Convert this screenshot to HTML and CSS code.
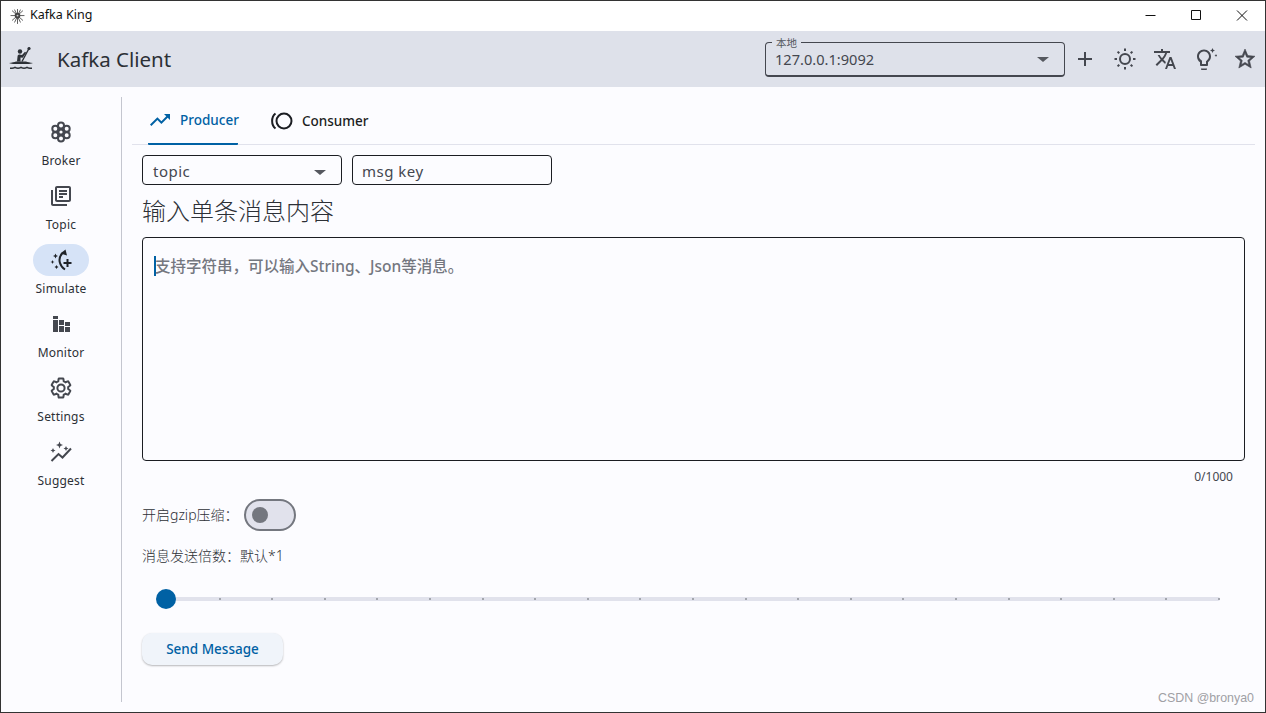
FILE: index.html
```html
<!DOCTYPE html>
<html lang="zh">
<head>
<meta charset="utf-8">
<title>Kafka King</title>
<link rel="stylesheet" href="styles.css">
</head>
<body>
<div class="window">
  <header class="titlebar">
    <svg class="app-logo" viewBox="0 0 16 16"><g stroke="#555" stroke-width="1" stroke-linecap="round"><path d="M8 0.500v15M1 7h14M2.500 2l11 10M13.500 2l-11 10M5 1l6 13M11 1l-6 13"/></g><circle cx="8" cy="7" r="3" fill="#444"/><circle cx="8" cy="7" r="1" fill="#ccc"/></svg>
    <span class="title-text">Kafka King</span>
    <div class="win-controls">
      <svg class="win-btn" viewBox="0 0 46 30"><path d="M18.500 14.500h10" stroke="#111" fill="none"/></svg>
      <svg class="win-btn" viewBox="0 0 46 30"><path d="M18.500 9.500h9v9h-9z" stroke="#111" fill="none"/></svg>
      <svg class="win-btn" viewBox="0 0 46 30"><path d="M18 9.500l10 10M28 9.500l-10 10" stroke="#111" fill="none"/></svg>
    </div>
  </header>

  <div class="appbar">
    <svg class="kayak" viewBox="0 0 24 24"><circle cx="11" cy="5.500" r="2.200"/><path d="M8 15.500l.6-5.500c.2-1 1-1.500 2-1.500l2.400.5 3-3.200 1.200.9-3.500 5-2.200-.2v4z"/><path d="M20.500 1.500l-7.500 14" stroke="#2c3036" stroke-width="1.400" fill="none"/><circle cx="20" cy="2.500" r="1.600"/><path d="M0 17c3-.4 5.500-1 7-1.500h10c1.500.5 4 1.100 7 1.500-2 .8-4 1-5 1H5c-1 0-3-.2-5-1z"/><path d="M21 23c-1.030 0-2.060-.25-3-.75-1.890 1-4.110 1-6 0-1.890 1-4.110 1-6 0-.95.5-1.970.75-3 .75H1v-1.500h2c1.040 0 2.080-.35 3-1 1.830 1.300 4.170 1.300 6 0 1.830 1.300 4.170 1.300 6 0 .91.65 1.960 1 3 1h2V23z"/></svg>
    <h1 class="brand">Kafka Client</h1>
    <div class="host-select">
      <span class="host-legend">本地</span>
      <span class="host-value">127.0.0.1:9092</span>
      <span class="caret-down"></span>
    </div>
    <div class="actions">
      <svg class="ic" viewBox="0 0 24 24"><path d="M19 13h-6v6h-2v-6H5v-2h6V5h2v6h6z"/></svg>
      <svg class="ic" viewBox="0 0 24 24"><circle cx="12" cy="12" r="5" fill="none" stroke="#44474f" stroke-width="2"/><path d="M12 1.500v2.500M12 20v2.500M1.500 12H4M20 12h2.500M4.600 4.600l1.700 1.700M17.700 17.700l1.700 1.700M4.600 19.400l1.700-1.700M17.700 6.300l1.700-1.700" stroke="#44474f" stroke-width="2" fill="none"/></svg>
      <svg class="ic" viewBox="0 0 24 24"><path d="M12.870 15.070l-2.540-2.510.03-.03c1.740-1.940 2.980-4.170 3.710-6.530H17V4h-7V2H8v2H1v1.990h11.170C11.500 7.920 10.440 9.750 9 11.350 8.070 10.320 7.300 9.190 6.690 8h-2c.73 1.630 1.730 3.170 2.980 4.560l-5.090 5.020L4 19l5-5 3.110 3.110.76-2.040zM18.500 10h-2L12 22h2l1.120-3h4.750L21 22h2l-4.500-12zm-2.620 7l1.620-4.330L19.120 17h-3.240z"/></svg>
      <svg class="ic" viewBox="0 0 24 24"><path d="M8 22c0 .5.400 1 1 1h4c.600 0 1-.5 1-1v-.500H8zm3-19.500c-3.900 0-7 3.100-7 7 0 2.400 1.200 4.500 3 5.700V18c0 .5.400 1 1 1h6c.600 0 1-.5 1-1v-2.800c1.800-1.300 3-3.400 3-5.700 0-3.900-3.100-7-7-7zm2.800 11.100l-.8.600V17H9v-3.300l-.8-.6C6.800 12.200 6 10.600 6 9.500c0-2.800 2.200-5 5-5s5 2.200 5 5c0 1.100-.8 2.700-2.200 4.100z"/><path d="M19.500 1l.8 1.700 1.700.8-1.700.8-.8 1.700-.8-1.700-1.700-.8 1.700-.8zM23 7l.5 1 1 .5-1 .5-.5 1-.5-1-1-.5 1-.5z"/></svg>
      <svg class="ic" viewBox="0 0 24 24"><path d="M22 9.240l-7.190-.62L12 2 9.190 8.630 2 9.240l5.460 4.730L5.820 21 12 17.270 18.180 21l-1.630-7.030L22 9.240zM12 15.400l-3.760 2.270 1-4.280-3.320-2.880 4.380-.38L12 6.100l1.710 4.040 4.380.38-3.320 2.880 1 4.280L12 15.400z" stroke="#44474f" stroke-width=".6"/></svg>
    </div>
  </div>

  <div class="body-row">
    <nav class="rail">
      <a class="rail-item">
        <span class="pill"><svg class="ic" viewBox="0 0 24 24"><g fill="none" stroke="#44474f" stroke-width="2"><circle cx="12" cy="12" r="2.600"/><circle cx="12" cy="5.500" r="3"/><circle cx="12" cy="18.500" r="3"/><circle cx="6.300" cy="8.800" r="3"/><circle cx="17.700" cy="8.800" r="3"/><circle cx="6.300" cy="15.200" r="3"/><circle cx="17.700" cy="15.200" r="3"/></g></svg></span>
        <span class="rail-label">Broker</span>
      </a>
      <a class="rail-item">
        <span class="pill"><svg class="ic" viewBox="0 0 24 24"><path d="M4 6H2v14c0 1.100.9 2 2 2h14v-2H4V6zm16-4H8c-1.100 0-2 .9-2 2v12c0 1.100.9 2 2 2h12c1.100 0 2-.9 2-2V4c0-1.100-.9-2-2-2zm0 14H8V4h12v12zM10 9h8v2h-8zm0 3h4v2h-4zm0-6h8v2h-8z"/></svg></span>
        <span class="rail-label">Topic</span>
      </a>
      <a class="rail-item">
        <span class="pill pill-on"><svg class="ic" viewBox="0 0 24 24"><path d="M14 4.500C10.500 8 10 12 11 15c.7 2.500 2.500 5 5 6.500" fill="none" stroke="#1f2329" stroke-width="2"/><path d="M11.500 5.500L16.500 1.500l1.500 6z" fill="#1f2329"/><path d="M17.500 11h2v3h3v2h-3v3h-2v-3h-3v-2h3zM6.500 5.500l.8 1.700 1.700.8-1.700.8-.8 1.700-.8-1.700L4 8l1.700-.8zM3.500 12l.6 1.400 1.400.6-1.400.6-.6 1.400-.6-1.400L1.500 14l1.400-.6zM7.500 17l.7 1.300 1.300.7-1.300.7-.7 1.300-.7-1.300L5.500 19l1.300-.7z" fill="#1f2329"/></svg></span>
        <span class="rail-label">Simulate</span>
      </a>
      <a class="rail-item">
        <span class="pill"><svg class="ic" viewBox="0 0 24 24"><path d="M4 4h5v3H4zM4 8h5v12H4zM10 8h5v5h-5zM10 14h5v6h-5zM16 10h5v4h-5zM16 15h5v5h-5z"/></svg></span>
        <span class="rail-label">Monitor</span>
      </a>
      <a class="rail-item">
        <span class="pill"><svg class="ic" viewBox="0 0 24 24"><path fill="none" stroke="#44474f" stroke-width="2" d="M19.140 12.940c.04-.3.06-.61.06-.94 0-.32-.02-.64-.07-.94l2.030-1.580c.18-.14.23-.41.12-.61l-1.920-3.320c-.12-.22-.37-.29-.59-.22l-2.390.96c-.5-.38-1.030-.7-1.620-.94l-.36-2.540c-.04-.24-.24-.41-.48-.41h-3.840c-.24 0-.43.17-.47.41l-.36 2.540c-.59.24-1.130.57-1.620.94l-2.390-.96c-.22-.08-.47 0-.59.22L2.740 8.870c-.12.21-.08.47.12.61l2.030 1.580c-.05.3-.09.63-.09.94s.02.64.07.94l-2.030 1.580c-.18.14-.23.41-.12.61l1.920 3.320c.12.22.37.29.59.22l2.390-.96c.5.38 1.030.7 1.620.94l.36 2.540c.05.24.24.41.48.41h3.840c.24 0 .44-.17.47-.41l.36-2.540c.59-.24 1.130-.56 1.620-.94l2.390.96c.22.08.47 0 .59-.22l1.920-3.320c.12-.22.07-.47-.12-.61l-2.010-1.580zM12 15.600c-1.980 0-3.600-1.620-3.600-3.600s1.620-3.600 3.600-3.600 3.600 1.620 3.600 3.600-1.620 3.600-3.600 3.600z"/></svg></span>
        <span class="rail-label">Settings</span>
      </a>
      <a class="rail-item">
        <span class="pill"><svg class="ic" viewBox="0 0 24 24"><path d="M2.500 21l7-7 4 3.500 8.500-9" fill="none" stroke="#44474f" stroke-width="2"/><path d="M10.500 1.500l1 2.500 2.500 1-2.500 1-1 2.500-1-2.500-2.500-1 2.500-1zM4 8l.8 1.700 1.700.8-1.700.8L4 13l-.8-1.700-1.700-.8 1.700-.8zM17 6l.8 1.700 1.700.8-1.700.8-.8 1.700-.8-1.700-1.700-.8 1.700-.8z"/></svg></span>
        <span class="rail-label">Suggest</span>
      </a>
    </nav>

    <main class="content">
      <div class="tabs">
        <div class="tab tab-on">
          <svg class="tab-ic" viewBox="0 0 24 24"><path d="M16 6l2.290 2.290-4.880 4.880-4-4L2 16.590 3.410 18l6-6 4 4 6.300-6.290L22 12V6z"/></svg>
          <span>Producer</span>
        </div>
        <div class="tab">
          <svg class="tab-ic" viewBox="0 0 24 24"><circle cx="14" cy="12" r="7.500" fill="none" stroke="#1b1d22" stroke-width="2"/><path d="M5.500 4.500C1 8 1 16 5.500 19.500" fill="none" stroke="#1b1d22" stroke-width="2"/></svg>
          <span>Consumer</span>
        </div>
      </div>

      <div class="form">
        <div class="field-row">
          <div class="field">topic<span class="caret-down"></span></div>
          <div class="field">msg key</div>
        </div>
        <h2 class="heading">输入单条消息内容</h2>
        <div class="msgbox"><span class="msg-caret"></span><span class="placeholder">支持字符串，可以输入String、Json等消息。</span></div>
        <div class="counter">0/1000</div>
        <div class="gzip-row">
          <span class="small">开启gzip压缩：</span>
          <span class="switch"><span class="knob"></span></span>
        </div>
        <div class="small repeat">消息发送倍数：默认*1</div>
        <div class="slider">
          <span class="tick first"></span><span class="tick"></span><span class="tick"></span><span class="tick"></span><span class="tick"></span><span class="tick"></span><span class="tick"></span><span class="tick"></span><span class="tick"></span><span class="tick"></span><span class="tick"></span><span class="tick"></span><span class="tick"></span><span class="tick"></span><span class="tick"></span><span class="tick"></span><span class="tick"></span><span class="tick"></span><span class="tick"></span><span class="tick"></span><span class="tick"></span>
          <span class="thumb"></span>
        </div>
        <button class="send">Send Message</button>
      </div>
    </main>
  </div>
  <span class="watermark">CSDN @bronya0</span>
</div>
</body>
</html>
```
FILE: styles.css
```css
* { box-sizing: border-box; }
html, body { margin: 0; padding: 0; }
body {
  width: 1266px;
  height: 713px;
  overflow: hidden;
  font-family: "Noto Sans", "Noto Sans CJK SC", sans-serif;
  color: #1b1d22;
}
.window {
  position: relative;
  width: 1266px;
  height: 713px;
  border: 1px solid #333;
  background: #fcfcff;
  display: flex;
  flex-direction: column;
}
.titlebar {
  height: 30px;
  background: #fff;
  display: flex;
  align-items: center;
  padding-left: 9px;
  flex: none;
}
.app-logo { width: 15px; height: 15px; margin-right: 5px; }
.title-text { font-size: 12.500px; line-height: 16px; margin-top: -2px; color: #111; }
.win-controls { margin-left: auto; display: flex; }
.win-btn { width: 46px; height: 30px; display: block; }
.appbar {
  height: 56px;
  flex: none;
  background: #dee1ea;
  display: flex;
  align-items: center;
  padding-left: 8px;
}
.kayak { width: 24px; height: 24px; fill: #2c3036; margin-top: -3px; }
.brand {
  font-weight: 400;
  font-size: 20.500px;
  margin: 0 0 0 24px;
  color: #2c3036;
  line-height: 56px;
}
.host-select {
  position: relative;
  margin-left: auto;
  width: 300px;
  height: 35px;
  margin-top: 1px;
  border: 1px solid #44474f;
  border-bottom-width: 2px;
  border-radius: 4px;
  padding: 6px 9px 0;
  font-size: 14.600px;
  line-height: 20px;
  color: #44474f;
}
.host-legend {
  position: absolute;
  left: 6px;
  top: -6px;
  padding: 0 4px;
  background: #dee1ea;
  font-size: 10.500px;
  line-height: 12px;
  color: #55585f;
}
.host-select .caret-down { right: 15px; top: 14px; }
.caret-down {
  position: absolute;
  width: 0;
  height: 0;
  border-left: 6px solid transparent;
  border-right: 6px solid transparent;
  border-top: 5px solid #55585f;
}
.actions { display: flex; gap: 16px; padding: 0 8px 0 8px; }
.ic { width: 24px; height: 24px; fill: #44474f; display: block; }
.body-row { flex: 1; display: flex; min-height: 0; }
.rail {
  width: 121px;
  flex: none;
  margin: 10px 0;
  border-right: 1px solid #c4c6cf;
  padding: 19px 0 0 0;
  height: 605px;
  display: flex;
  flex-direction: column;
  align-items: center;
}
.rail-item {
  width: 80px;
  height: 64px;
  display: flex;
  flex-direction: column;
  align-items: center;
}
.pill {
  width: 56px;
  height: 32px;
  border-radius: 16px;
  display: flex;
  align-items: center;
  justify-content: center;
}
.pill-on { background: #d6e3f7; }
.rail-label {
  font-size: 12px;
  line-height: 16px;
  margin-top: 5px;
  color: #2c3036;
  letter-spacing: .2px;
}
.content { flex: 1; padding: 10px 10px 0 10px; min-width: 0; }
.tabs {
  display: flex;
  height: 48px;
  border-bottom: 1px solid #e1e2ec;
  padding-left: 16px;
  gap: 32px;
}
.tab {
  display: flex;
  align-items: center;
  gap: 8px;
  height: 48px;
  font-size: 13.500px;
  font-weight: 500;
  color: #1b1d22;
}
.tab-on {
  width: 90px;
  color: #0061a4;
  border-bottom: 2px solid #0061a4;
  border-radius: 0 0 1px 1px;
}
.tab-ic { width: 24px; height: 24px; fill: #1b1d22; flex: none; }
.tab-on .tab-ic { fill: #0061a4; }
.form { padding: 10px 0 0 10px; margin-right: 10px; }
.field-row { display: flex; gap: 10px; }
.field {
  position: relative;
  width: 200px;
  height: 30px;
  border: 1px solid #1b1d22;
  border-radius: 4px;
  font-size: 15px;
  line-height: 30px;
  padding-left: 10px;
  color: #44474f;
  letter-spacing: .5px;
}
.field + .field { padding-left: 9px; }
.field .caret-down { right: 15px; top: 14px; }
.heading {
  margin: 8px 0 0 0;
  font-weight: 300;
  font-size: 24px;
  line-height: 36px;
  height: 44px;
  color: #2c3036;
}
.msgbox {
  position: relative;
  height: 224px;
  border: 1px solid #1b1d22;
  border-radius: 4px;
  padding: 16px 0 0 12px;
  font-size: 15.500px;
  line-height: 24px;
  color: #74777f;
  font-weight: 500;
}
.msg-caret {
  position: absolute;
  left: 11px;
  top: 18px;
  width: 2px;
  height: 20px;
  background: #0061a4;
}
.placeholder { display: block; }
.counter {
  text-align: right;
  font-size: 12px;
  line-height: 16px;
  padding: 8px 12px 0 0;
  color: #44474f;
  height: 34px;
}
.gzip-row { display: flex; align-items: center; height: 32px; margin-top: 4px; }
.small { font-size: 14px; font-weight: 300; color: #2c3036; line-height: 18px; }
.switch {
  display: block;
  width: 52px;
  height: 32px;
  margin-left: 5px;
  border: 2px solid #74777f;
  border-radius: 16px;
  background: #e1e2ec;
  position: relative;
}
.knob {
  position: absolute;
  left: 6px;
  top: 6px;
  width: 16px;
  height: 16px;
  border-radius: 50%;
  background: #74777f;
}
.repeat { margin-top: 16px; height: 18px; }
.slider {
  position: relative;
  height: 4px;
  margin: 32px 25px 0 14px;
  background: #e1e2ec;
  border-radius: 2px;
  display: flex;
  justify-content: space-between;
  align-items: center;
  padding: 0 0 0 10px;
}
.tick { width: 2px; height: 2px; border-radius: 50%; background: #8d9199; }
.tick.first { visibility: hidden; }
.thumb {
  position: absolute;
  left: 0;
  top: -8px;
  width: 20px;
  height: 20px;
  border-radius: 50%;
  background: #0061a4;
}
.send {
  display: block;
  margin: 32px 0 0 0;
  width: 141px;
  height: 32px;
  border: none;
  border-radius: 10px;
  background: #f0f4fa;
  box-shadow: 0 1px 2px rgba(0,0,0,.28);
  color: #0061a4;
  font: 500 13.500px "Noto Sans", sans-serif;
}
.watermark {
  position: absolute;
  right: 11px;
  bottom: 7px;
  font-family: "Liberation Sans", sans-serif;
  font-size: 12.400px;
  color: #a0a0a5;
}
```
